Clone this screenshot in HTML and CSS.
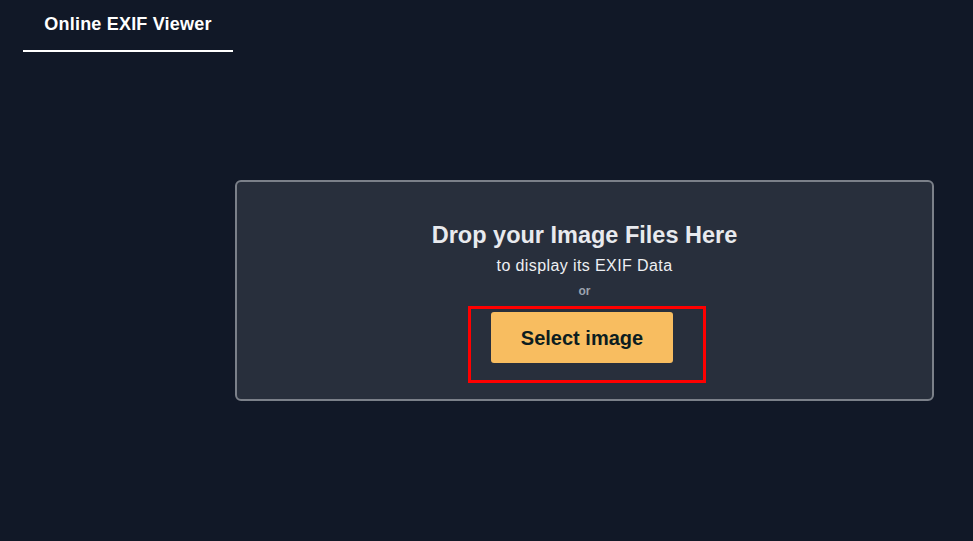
FILE: index.html
```html
<!DOCTYPE html>
<html lang="en">
<head>
<meta charset="utf-8">
<title>Online EXIF Viewer</title>
<link rel="stylesheet" href="styles.css">
</head>
<body>
<header class="tabs">
  <div class="tab active">Online EXIF Viewer</div>
</header>
<main class="main">
  <section class="dropzone">
    <h1 class="drop-title">Drop your Image Files Here</h1>
    <p class="drop-sub">to display its EXIF Data</p>
    <p class="drop-or">or</p>
    <div class="highlight">
      <button class="select-btn">Select image</button>
    </div>
  </section>
</main>
</body>
</html>
```
FILE: styles.css
```css
* { box-sizing: border-box; }
html, body { margin: 0; padding: 0; }
body {
  background: #111827;
  font-family: "Liberation Sans", Arial, sans-serif;
  width: 973px;
  height: 541px;
  overflow: hidden;
}
.tabs {
  display: flex;
  padding-left: 23px;
}
.tab {
  width: 210px;
  height: 52px;
  padding-top: 13px;
  text-align: center;
  color: #ffffff;
  font-weight: bold;
  font-size: 18px;
  line-height: 22px;
  letter-spacing: 0.2px;
  border-bottom: 2px solid #ffffff;
}
.main {
  padding: 128px 39px 0 235px;
}
.dropzone {
  background: #282f3c;
  border: 2px solid #7b8089;
  border-radius: 6px;
  height: 221px;
  padding-top: 39px;
  display: flex;
  flex-direction: column;
  align-items: center;
}
.drop-title {
  margin: 0;
  font-size: 23.5px;
  line-height: 28px;
  font-weight: bold;
  color: #e8eaee;
}
.drop-sub {
  margin: 6px 0 0;
  font-size: 16px;
  line-height: 22px;
  letter-spacing: 0.4px;
  color: #eef0f3;
}
.drop-or {
  margin: 6px 0 0;
  font-size: 12px;
  line-height: 16px;
  font-weight: bold;
  color: #9ca3af;
}
.highlight {
  margin: 7px 0 0 5px;
  border: 3px solid #ff0000;
  padding: 3px 30px 17px 20px;
}
.select-btn {
  display: block;
  width: 182px;
  height: 51px;
  padding: 2px 0 0;
  border: none;
  border-radius: 3px;
  background: #f8bd60;
  color: #0c1d20;
  font-family: "Liberation Sans", Arial, sans-serif;
  font-weight: bold;
  font-size: 20px;
  cursor: pointer;
}
```
